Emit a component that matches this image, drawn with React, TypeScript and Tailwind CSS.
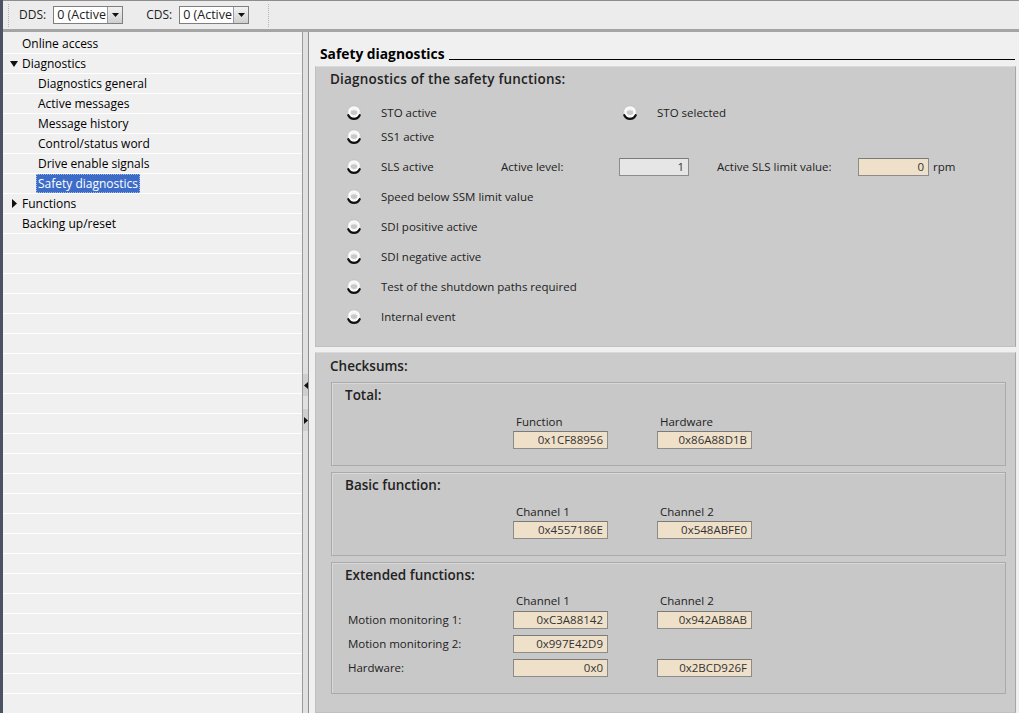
import React from 'react';

const treeItems: { label: string; level: number; arrow?: 'down' | 'right'; selected?: boolean }[] = [
  { label: 'Online access', level: 0 },
  { label: 'Diagnostics', level: 0, arrow: 'down' },
  { label: 'Diagnostics general', level: 1 },
  { label: 'Active messages', level: 1 },
  { label: 'Message history', level: 1 },
  { label: 'Control/status word', level: 1 },
  { label: 'Drive enable signals', level: 1 },
  { label: 'Safety diagnostics', level: 1, selected: true },
  { label: 'Functions', level: 0, arrow: 'right' },
  { label: 'Backing up/reset', level: 0 },
];

function Led() {
  return (
    <svg width="16" height="16" viewBox="0 0 16 16" className="shrink-0">
      <circle cx="8" cy="7.5" r="7" fill="#dcdcdc" stroke="#c2c2c2" strokeWidth="0.8" />
      <circle cx="8" cy="7" r="5" fill="#f4f4f4" stroke="#ffffff" strokeWidth="1.2" />
      <ellipse cx="8" cy="7.6" rx="3.2" ry="2.4" fill="#c9c9c9" />
      <path d="M2.3 10.2 A6.3 6.3 0 0 0 13.7 10.2" fill="none" stroke="#111" strokeWidth="2.2" strokeLinecap="round" />
    </svg>
  );
}

function ToolSelect() {
  return (
    <div className="flex h-[18px] w-[70px] border border-[#7f7f7f] bg-white">
      <div className="flex-1 whitespace-nowrap pl-[3px] text-[12.5px] leading-[16px] text-[#222]">0 (Active</div>
      <div className="flex w-[15px] items-center justify-center border-l border-[#9a9a9a] bg-gradient-to-b from-[#f2f2f2] to-[#cfcfcf]">
        <svg width="7" height="4" viewBox="0 0 7 4">
          <path d="M0 0 H7 L3.5 4 Z" fill="#111" />
        </svg>
      </div>
    </div>
  );
}

function Field({ value, w = 'w-[95px]', bg = 'bg-[#efe0ca]' }: { value: string; w?: string; bg?: string }) {
  return (
    <div className={`h-[18px] ${w} ${bg} border border-[#8c8c8c] border-t-[#7a7a7a] pr-[4px] text-right text-[11.5px] leading-[16px] text-[#333]`}>
      {value}
    </div>
  );
}

function LedRow({ label, h, children }: { label: string; h: string; children?: React.ReactNode }) {
  return (
    <div className={`flex ${h} items-center`}>
      <Led />
      <span className="ml-[19px] w-[120px] whitespace-nowrap">{label}</span>
      {children}
    </div>
  );
}

function SubPanel({ title, h, children }: { title: string; h: string; children: React.ReactNode }) {
  return (
    <div className={`${h} ml-[15px] mr-[9px] border border-[#aaaaaa] bg-[#c8c8c8] shadow-[inset_1px_1px_0_#d9d9d9]`}>
      <div className="pl-[13px] pt-[3px] text-[13.5px] font-semibold leading-[18px] text-[#222]">{title}</div>
      {children}
    </div>
  );
}

export default function App() {
  const emptyRows = Array.from({ length: 24 });
  return (
    <div className="flex h-[713px] w-[1019px] overflow-hidden bg-[#f0f0f0] font-['Open_Sans','Noto_Sans',sans-serif] text-black">
      <div className="w-[3px] shrink-0 bg-[#4b5262]" />
      <div className="flex flex-1 flex-col">
        {/* Toolbar */}
        <div className="flex h-[32px] shrink-0 items-center border-t border-b-[3px] border-t-[#8e8e8e] border-b-[#a5a5a5] bg-[#ececec] text-[12px]">
          <div className="ml-[5px] h-[23px] border-l border-dotted border-[#b4b4b4]" />
          <span className="ml-[10px] text-[#222]">DDS:</span>
          <div className="ml-[7px]">
            <ToolSelect />
          </div>
          <span className="ml-[23px] text-[#222]">CDS:</span>
          <div className="ml-[7px]">
            <ToolSelect />
          </div>
          <div className="ml-[19px] h-[23px] border-l border-dotted border-[#b4b4b4]" />
        </div>

        <div className="flex flex-1 overflow-hidden">
          {/* Tree */}
          <div className="w-[299px] shrink-0 pt-[2px] text-[12px]">
            {treeItems.map((it) => (
              <div key={it.label} className="flex h-[20px] items-center border-b border-white">
                <div className="flex w-[19px] justify-center pl-[3px]">
                  {it.arrow === 'down' && (
                    <svg width="8" height="6" viewBox="0 0 8 6">
                      <path d="M0 0 H8 L4 6 Z" fill="#111" />
                    </svg>
                  )}
                  {it.arrow === 'right' && (
                    <svg width="5" height="9" viewBox="0 0 5 9">
                      <path d="M0 0 L5 4.5 L0 9 Z" fill="#111" />
                    </svg>
                  )}
                </div>
                <div className={it.level === 1 ? 'ml-[16px]' : ''}>
                  {it.selected ? (
                    <span className="-ml-[2px] block h-[19px] border border-dotted border-[#9fb7e6] bg-[#3d6cc8] px-[1px] leading-[17px] text-white">{it.label}</span>
                  ) : (
                    <span className="whitespace-nowrap">{it.label}</span>
                  )}
                </div>
              </div>
            ))}
            {emptyRows.map((_, i) => (
              <div key={i} className="h-[20px] border-b border-white" />
            ))}
          </div>

          {/* Splitter */}
          <div className="flex w-[7px] shrink-0">
            <div className="w-px bg-[#9b9b9b]" />
            <div className="flex w-[5px] flex-col items-center bg-[#e0e0e0] pt-[342px]">
              <div className="flex h-[22px] w-[5px] items-center justify-center bg-[#cfcfcf]">
                <svg width="4" height="7" viewBox="0 0 4 7">
                  <path d="M4 0 L0 3.5 L4 7 Z" fill="#111" />
                </svg>
              </div>
              <div className="mt-[13px] flex h-[22px] w-[5px] items-center justify-center bg-[#cfcfcf]">
                <svg width="4" height="7" viewBox="0 0 4 7">
                  <path d="M0 0 L4 3.5 L0 7 Z" fill="#111" />
                </svg>
              </div>
            </div>
            <div className="w-px bg-[#8e8e8e]" />
          </div>

          {/* Content */}
          <div className="flex flex-1 flex-col pl-[6px] pr-[3px] text-[11.5px] text-[#222]">
            <div className="flex h-[34px] shrink-0 items-end pl-[5px] pr-[1px] pb-[4px]">
              <span className="text-[13.8px] font-bold leading-[16px] text-black">Safety diagnostics</span>
              <div className="mb-[2px] ml-[4px] flex-1 border-b border-black" />
            </div>

            {/* Diagnostics panel */}
            <div className="h-[281px] shrink-0 border border-[#c0c0c0] border-t-[#dadada] border-r-[#a6a6a6] bg-[#cbcbcb]">
              <div className="h-[23px] pl-[14px] pt-[2px] text-[13.5px] font-semibold leading-[20px] tracking-[0.2px] text-[#222]">
                Diagnostics of the safety functions:
              </div>
              <div className="pl-[30px] pt-[11px]">
                <LedRow label="STO active" h="h-[24px]">
                  <div className="ml-[121px] flex items-center">
                    <Led />
                    <span className="ml-[19px]">STO selected</span>
                  </div>
                </LedRow>
                <LedRow label="SS1 active" h="h-[24px]" />
                <div className="mt-[3px]">
                  <LedRow label="SLS active" h="h-[30px]">
                    <span className="w-[118px]">Active level:</span>
                    <Field value="1" w="w-[70px]" bg="bg-[#e6e6e6]" />
                    <span className="ml-[28px] w-[141px]">Active SLS limit value:</span>
                    <Field value="0" w="w-[71px]" />
                    <span className="ml-[4px]">rpm</span>
                  </LedRow>
                </div>
                <LedRow label="Speed below SSM limit value" h="h-[30px]" />
                <LedRow label="SDI positive active" h="h-[30px]" />
                <LedRow label="SDI negative active" h="h-[30px]" />
                <LedRow label="Test of the shutdown paths required" h="h-[30px]" />
                <LedRow label="Internal event" h="h-[30px]" />
              </div>
            </div>

            {/* Checksums panel */}
            <div className="mt-[5px] h-[361px] shrink-0 border border-[#c0c0c0] border-t-[#dadada] border-r-[#a6a6a6] bg-[#cbcbcb]">
              <div className="h-[29px] pl-[14px] pt-[3px] text-[13.5px] font-semibold leading-[20px] text-[#222]">Checksums:</div>

              <SubPanel title="Total:" h="h-[84px]">
                <div className="flex pl-[181px] pt-[9px]">
                  <div className="w-[144px]">
                    <div className="pl-[3px] leading-[18px]">Function</div>
                    <Field value="0x1CF88956" />
                  </div>
                  <div>
                    <div className="pl-[3px] leading-[18px]">Hardware</div>
                    <Field value="0x86A88D1B" />
                  </div>
                </div>
              </SubPanel>

              <SubPanel title="Basic function:" h="mt-[6px] h-[84px]">
                <div className="flex pl-[181px] pt-[9px]">
                  <div className="w-[144px]">
                    <div className="pl-[3px] leading-[18px]">Channel 1</div>
                    <Field value="0x4557186E" />
                  </div>
                  <div>
                    <div className="pl-[3px] leading-[18px]">Channel 2</div>
                    <Field value="0x548ABFE0" />
                  </div>
                </div>
              </SubPanel>

              <SubPanel title="Extended functions:" h="mt-[6px] h-[132px]">
                <div className="pt-[8px]">
                  <div className="flex h-[19px] pl-[181px]">
                    <div className="w-[144px] pl-[3px] leading-[18px]">Channel 1</div>
                    <div className="pl-[3px] leading-[18px]">Channel 2</div>
                  </div>
                  {[
                    ['Motion monitoring 1:', '0xC3A88142', '0x942AB8AB'],
                    ['Motion monitoring 2:', '0x997E42D9', ''],
                    ['Hardware:', '0x0', '0x2BCD926F'],
                  ].map(([l, a, b]) => (
                    <div key={l} className="flex h-[24px] items-start">
                      <div className="w-[181px] pl-[16px] leading-[18px]">{l}</div>
                      <div className="w-[144px]">
                        <Field value={a} />
                      </div>
                      {b && <Field value={b} />}
                    </div>
                  ))}
                </div>
              </SubPanel>
            </div>
          </div>
        </div>
      </div>
    </div>
  );
}
